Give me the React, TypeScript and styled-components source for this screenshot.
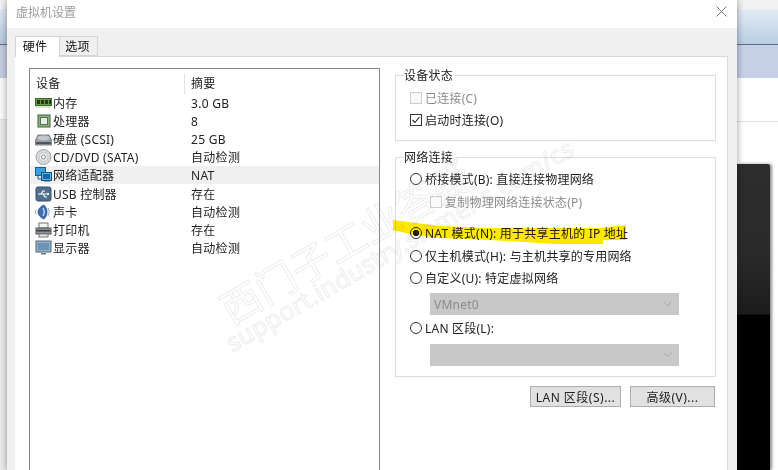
import React from 'react';
import styled, { createGlobalStyle } from 'styled-components';

const GlobalStyle = createGlobalStyle`
  html, body {
    margin: 0;
    padding: 0;
    background: #fff;
  }
  body {
    font-family: "Noto Sans", "Noto Sans CJK SC", sans-serif;
    font-size: 12px;
    letter-spacing: 0.22px;
    color: #222;
  }
`;

const Page = styled.div`
  position: relative;
  width: 778px;
  height: 470px;
  overflow: hidden;
  display: flex;
`;

const Backdrop = styled.div<{ $width: number }>`
  width: ${(p) => p.$width}px;
  flex: none;
  display: flex;
  flex-direction: column;
`;

const Band = styled.div<{ $h?: number; $bg: string; $line?: string }>`
  height: ${(p) => (p.$h ? `${p.$h}px` : 'auto')};
  flex: ${(p) => (p.$h ? 'none' : '1')};
  background: ${(p) => p.$bg};
  border-bottom: ${(p) => (p.$line ? `1px solid ${p.$line}` : 'none')};
  box-sizing: border-box;
`;

const DarkPane = styled.div`
  flex: 1;
  margin-right: 8px;
  border-radius: 0 2px 0 0;
  background: linear-gradient(#2d2d2d 0, #2a2a2a 90px, #1c1c1c 150px, #000 151px);
  box-shadow: 2px 0 3px rgba(0, 0, 0, 0.45);
`;

const Dialog = styled.div`
  position: relative;
  z-index: 1;
  width: 730px;
  flex: none;
  display: flex;
  flex-direction: column;
  background: #f0f0f0;
  box-shadow: 0 0 7px rgba(0, 0, 0, 0.4);
`;

const TitleBar = styled.div`
  height: 28px;
  flex: none;
  display: flex;
  align-items: center;
  justify-content: space-between;
  padding: 0 10px 5px 9px;
  box-sizing: border-box;
  background: #fff;
  color: #9a9a9a;
  letter-spacing: 0;
`;

const CloseIcon = styled.svg`
  width: 11px;
  height: 11px;
  stroke: #777;
  stroke-width: 1;
  fill: none;
`;

const TabStrip = styled.div`
  height: 28px;
  flex: none;
  display: flex;
  align-items: flex-end;
  padding-left: 8px;
`;

const Tab = styled.div<{ $active?: boolean }>`
  box-sizing: border-box;
  width: ${(p) => (p.$active ? 45 : 38)}px;
  height: ${(p) => (p.$active ? 21 : 20)}px;
  margin-bottom: ${(p) => (p.$active ? -1 : 0)}px;
  padding: ${(p) => (p.$active ? '0 5px 2px 0' : '0 2px 0 0')};
  position: relative;
  display: flex;
  align-items: center;
  justify-content: center;
  background: ${(p) => (p.$active ? '#fff' : '#f0f0f0')};
  border: 1px solid #d4d4d4;
  border-bottom: ${(p) => (p.$active ? 'none' : '1px solid #d4d4d4')};
  border-left-width: ${(p) => (p.$active ? 1 : 0)}px;
  color: #111;
`;

const Panel = styled.div`
  flex: 1;
  min-height: 0;
  display: flex;
  gap: 15px;
  margin: 0 9px 0 8px;
  padding: 11px 11px 0 14px;
  background: #fff;
  border-top: 1px solid #d9d9d9;
  border-right: 1px solid #d9d9d9;
`;

const DeviceList = styled.div`
  width: 351px;
  flex: none;
  box-sizing: border-box;
  border: 1px solid #868686;
  border-bottom: none;
`;

const ListHeader = styled.div`
  display: grid;
  grid-template-columns: 155px 1fr;
  height: 25px;
  align-items: center;
  padding-top: 5px;
  box-sizing: border-box;
`;

const HeaderCell = styled.div<{ $first?: boolean }>`
  padding-left: ${(p) => (p.$first ? 6 : 6)}px;
  border-right: ${(p) => (p.$first ? '1px solid #e2e2e2' : 'none')};
  line-height: 20px;
`;

const DeviceRow = styled.div<{ $selected?: boolean }>`
  display: grid;
  grid-template-columns: 155px 1fr;
  align-items: center;
  height: 18.1px;
  background: ${(p) => (p.$selected ? '#f0f0f0' : 'transparent')};
`;

const DeviceName = styled.div`
  display: flex;
  align-items: center;
  gap: 1px;
  padding-left: 5px;
  white-space: nowrap;
`;

const DeviceSummary = styled.div`
  padding-left: 6px;
  letter-spacing: 0.3px;
`;

const DeviceIcon = styled.svg`
  width: 17px;
  height: 16px;
  flex: none;
`;

const Options = styled.div`
  width: 321px;
  flex: none;
  display: flex;
  flex-direction: column;
`;

const Group = styled.fieldset<{ $top?: number }>`
  margin: ${(p) => p.$top ?? 0}px 0 0;
  padding: 0 14px;
  border: 1px solid #dcdcdc;
  min-width: 0;
`;

const Legend = styled.legend`
  margin-left: -6px;
  padding: 0 2px 0 0;
  line-height: 16px;
  height: 14px;
`;

const OptionRow = styled.div<{ $top?: number; $bottom?: number; $indent?: number; $disabled?: boolean }>`
  display: flex;
  align-items: center;
  gap: 3px;
  height: 22px;
  margin-top: ${(p) => p.$top ?? 0}px;
  margin-bottom: ${(p) => p.$bottom ?? 0}px;
  margin-left: ${(p) => p.$indent ?? 0}px;
  color: ${(p) => (p.$disabled ? '#8c8c8c' : '#222')};
  white-space: nowrap;
`;

const Checkbox = styled.span<{ $disabled?: boolean }>`
  box-sizing: border-box;
  width: 12px;
  height: 12px;
  flex: none;
  display: flex;
  border: 1px solid ${(p) => (p.$disabled ? '#cfcfcf' : '#333')};
  background: ${(p) => (p.$disabled ? '#fafafa' : '#fff')};
`;

const Radio = styled.span<{ $checked?: boolean }>`
  box-sizing: border-box;
  width: 12px;
  height: 12px;
  flex: none;
  border-radius: 50%;
  border: 1px solid #333;
  background: ${(p) =>
    p.$checked ? 'radial-gradient(circle, #222 0 3px, transparent 3.5px)' : '#fff'};
`;

const Select = styled.div<{ $top: number; $bottom?: number }>`
  width: 249px;
  height: 22px;
  flex: none;
  margin: ${(p) => p.$top}px 0 ${(p) => p.$bottom ?? 0}px 20px;
  padding: 0 5px 0 4px;
  box-sizing: border-box;
  display: flex;
  align-items: center;
  justify-content: space-between;
  background: #c8c8c8;
  color: #8a8a8a;
`;

const Chevron = styled.svg`
  width: 9px;
  height: 6px;
  margin-left: auto;
  margin-right: 2px;
  fill: none;
  stroke: #a4a4a4;
  stroke-width: 1;
`;

const ButtonRow = styled.div`
  display: flex;
  justify-content: flex-end;
  gap: 9px;
  margin: 9px 1px 0 0;
`;

const Button = styled.div<{ $width: number }>`
  width: ${(p) => p.$width}px;
  height: 21px;
  box-sizing: border-box;
  display: flex;
  align-items: center;
  justify-content: center;
  background: #e1e1e1;
  border: 1px solid #adadad;
  letter-spacing: 0.5px;
`;

/* Overlays: the forum watermark and the marker stroke lie over the dialog */
const Watermark = styled.div<{ $x: number; $y: number; $size: number }>`
  position: absolute;
  z-index: 2;
  left: ${(p) => p.$x}px;
  top: ${(p) => p.$y}px;
  transform: rotate(-30deg);
  transform-origin: 0 100%;
  font-size: ${(p) => p.$size}px;
  line-height: 1;
  white-space: nowrap;
  pointer-events: none;
  color: transparent;
  -webkit-text-stroke: 1px rgba(150, 150, 150, 0.18);
`;

const Marker = styled.svg`
  position: absolute;
  z-index: 3;
  left: 390px;
  top: 215px;
  width: 245px;
  height: 35px;
  mix-blend-mode: multiply;
  pointer-events: none;
`;

const Leaf = ({ children }: { children: React.ReactNode }) => (
  <DeviceIcon viewBox="0 0 17 16">{children}</DeviceIcon>
);

const icons: Record<string, React.ReactNode> = {
  memory: (
    <Leaf>
      <rect x="0.5" y="3.5" width="16" height="7" fill="#6d9a4c" stroke="#3e6a2c" />
      <rect x="2" y="5" width="3" height="4" fill="#23391a" />
      <rect x="6" y="5" width="3" height="4" fill="#23391a" />
      <rect x="10" y="5" width="3" height="4" fill="#23391a" />
      <rect x="14" y="5" width="2" height="4" fill="#23391a" />
      <path d="M1 12h15" stroke="#b7cf9b" />
    </Leaf>
  ),
  cpu: (
    <Leaf>
      <rect x="3" y="2" width="12" height="12" fill="#8fb27c" stroke="#3d5f3d" />
      <rect x="5.5" y="4.5" width="7" height="7" fill="#e6efe0" stroke="#52705a" />
    </Leaf>
  ),
  disk: (
    <Leaf>
      <path d="M3 4h11l3 6v4H0v-4z" fill="#9a9fa6" stroke="#666b72" strokeWidth="0.8" />
      <ellipse cx="8.5" cy="7" rx="6" ry="2.4" fill="#c3c8cd" />
      <rect x="1" y="11" width="15" height="2" fill="#50555c" />
    </Leaf>
  ),
  cd: (
    <Leaf>
      <circle cx="8.5" cy="8" r="7.5" fill="#d7d9da" stroke="#a3a6a8" />
      <circle cx="8.5" cy="8" r="4.5" fill="#eceded" stroke="#c3c5c6" />
      <circle cx="8.5" cy="8" r="2" fill="#fff" stroke="#8d9092" />
    </Leaf>
  ),
  network: (
    <Leaf>
      <rect x="0.5" y="0.5" width="10" height="8" fill="#3aa0dd" stroke="#175d8f" />
      <rect x="6.5" y="5.5" width="10" height="8" fill="#56b7ea" stroke="#15527e" />
      <rect x="8" y="7" width="7" height="5" fill="#0f6aa6" />
      <path d="M3 9v3h3M9 14h6" stroke="#175d8f" fill="none" />
    </Leaf>
  ),
  usb: (
    <Leaf>
      <rect x="1" y="1" width="15" height="14" rx="2" fill="#4f6f8c" stroke="#35506a" />
      <path d="M3 8h11M6 8l2-3h2M8 8l2 3h2" stroke="#fff" strokeWidth="1.2" fill="none" />
      <path d="M14.5 8l-2-1.6v3.2z" fill="#fff" />
    </Leaf>
  ),
  sound: (
    <Leaf>
      <path d="M3 8c0-3 3-6 6-7 2 2 3 4 3 7s-1 5-3 7c-3-1-6-4-6-7z" fill="#3d6fb0" stroke="#24477c" strokeWidth="0.7" />
      <path d="M8 4c1.5 2.5 1.5 5.500 0 8" stroke="#dbe7f6" strokeWidth="1.2" fill="none" />
      <path d="M13 4c1.500 2.500 1.500 5.500 0 8M1 5.500c-.8 1.500-.8 3.500 0 5" stroke="#98aac4" fill="none" />
    </Leaf>
  ),
  printer: (
    <Leaf>
      <rect x="4" y="1" width="9" height="5" fill="#f4f4f4" stroke="#777" />
      <rect x="1" y="6" width="15" height="6" fill="#8d9197" stroke="#55585d" />
      <rect x="1.5" y="8" width="14" height="1.5" fill="#3b3e42" />
      <rect x="4" y="12" width="9" height="3" fill="#e8e8e8" stroke="#777" />
    </Leaf>
  ),
  display: (
    <Leaf>
      <rect x="1" y="1" width="15" height="11" fill="#93b1c9" stroke="#55687a" />
      <rect x="3" y="3" width="11" height="7" fill="#6e93b2" />
      <path d="M6 13h5v1.5H6z" fill="#6d7680" />
    </Leaf>
  ),
};

const devices = [
  { icon: 'memory', name: '内存', summary: '3.0 GB' },
  { icon: 'cpu', name: '处理器', summary: '8' },
  { icon: 'disk', name: '硬盘 (SCSI)', summary: '25 GB' },
  { icon: 'cd', name: 'CD/DVD (SATA)', summary: '自动检测' },
  { icon: 'network', name: '网络适配器', summary: 'NAT', selected: true },
  { icon: 'usb', name: 'USB 控制器', summary: '存在' },
  { icon: 'sound', name: '声卡', summary: '自动检测' },
  { icon: 'printer', name: '打印机', summary: '存在' },
  { icon: 'display', name: '显示器', summary: '自动检测' },
];

const App: React.FC = () => (
  <Page>
    <GlobalStyle />
    <Backdrop $width={7}>
      <Band $h={9} $bg="#f2f2f2" />
      <Band $h={36} $bg="linear-gradient(#dfe8f2, #b4c8dc)" $line="#5d6f86" />
      <Band $h={33} $bg="#c5cce0" />
      <Band $h={42} $bg="#fafafa" $line="#dedede" />
      <Band $bg="#ececec" />
    </Backdrop>

    <Dialog>
      <TitleBar>
        <span>虚拟机设置</span>
        <CloseIcon viewBox="0 0 11 11">
          <path d="M0.5 0.5l10 10M10.5 0.5l-10 10" />
        </CloseIcon>
      </TitleBar>
      <TabStrip>
        <Tab $active>硬件</Tab>
        <Tab>选项</Tab>
      </TabStrip>
      <Panel>
        <DeviceList>
          <ListHeader>
            <HeaderCell $first>设备</HeaderCell>
            <HeaderCell>摘要</HeaderCell>
          </ListHeader>
          {devices.map((d) => (
            <DeviceRow key={d.name} $selected={d.selected}>
              <DeviceName>
                {icons[d.icon]}
                {d.name}
              </DeviceName>
              <DeviceSummary>{d.summary}</DeviceSummary>
            </DeviceRow>
          ))}
        </DeviceList>

        <Options>
          <Group>
            <Legend>设备状态</Legend>
            <OptionRow $top={5} $disabled>
              <Checkbox $disabled />
              已连接(C)
            </OptionRow>
            <OptionRow $bottom={9}>
              <Checkbox>
                <svg viewBox="0 0 10 10" width="10" height="10">
                  <path d="M1.5 5l2.5 2.5 4.5-5.5" fill="none" stroke="#222" strokeWidth="1.1" />
                </svg>
              </Checkbox>
              启动时连接(O)
            </OptionRow>
          </Group>

          <Group $top={9}>
            <Legend>网络连接</Legend>
            <OptionRow $top={4}>
              <Radio />
              桥接模式(B): 直接连接物理网络
            </OptionRow>
            <OptionRow $top={1} $indent={20} $disabled>
              <Checkbox $disabled />
              复制物理网络连接状态(P)
            </OptionRow>
            <OptionRow $top={9}>
              <Radio $checked />
              NAT 模式(N): 用于共享主机的 IP 地址
            </OptionRow>
            <OptionRow $top={1}>
              <Radio />
              仅主机模式(H): 与主机共享的专用网络
            </OptionRow>
            <OptionRow>
              <Radio />
              自定义(U): 特定虚拟网络
            </OptionRow>
            <Select $top={4}>
              VMnet0
              <Chevron viewBox="0 0 9 6">
                <path d="M0.5 0.5l4 4 4-4" />
              </Chevron>
            </Select>
            <OptionRow $top={2}>
              <Radio />
              LAN 区段(L):
            </OptionRow>
            <Select $top={5} $bottom={10}>
              <Chevron viewBox="0 0 9 6">
                <path d="M0.5 0.5l4 4 4-4" />
              </Chevron>
            </Select>
          </Group>

          <ButtonRow>
            <Button $width={91}>LAN 区段(S)...</Button>
            <Button $width={85}>高级(V)...</Button>
          </ButtonRow>
        </Options>
      </Panel>
    </Dialog>

    <Backdrop $width={41}>
      <Band $h={9} $bg="#f2f2f2" />
      <Band $h={36} $bg="linear-gradient(#e4ecf5, #b9cde2)" $line="#5d6f86" />
      <Band $h={33} $bg="#c5cfe6" />
      <Band $h={44} $bg="#fff" $line="#e2e2e2" />
      <Band $h={42} $bg="#fff" />
      <DarkPane />
    </Backdrop>

    <Watermark $x={234} $y={290} $size={40}>
      西门子工业答疑
    </Watermark>
    <Watermark $x={234} $y={330} $size={25}>
      support.industry.siemens.com/cs
    </Watermark>
    <Marker viewBox="0 0 245 35">
      <path
        d="M3 5 L50 11 L100 13 L210 13 L236 10 L236 25 L213 25 L213 29 L165 29 L100 25 L50 23 L20 19 L3 15 Z"
        fill="#ffe800"
      />
    </Marker>
  </Page>
);

export default App;
